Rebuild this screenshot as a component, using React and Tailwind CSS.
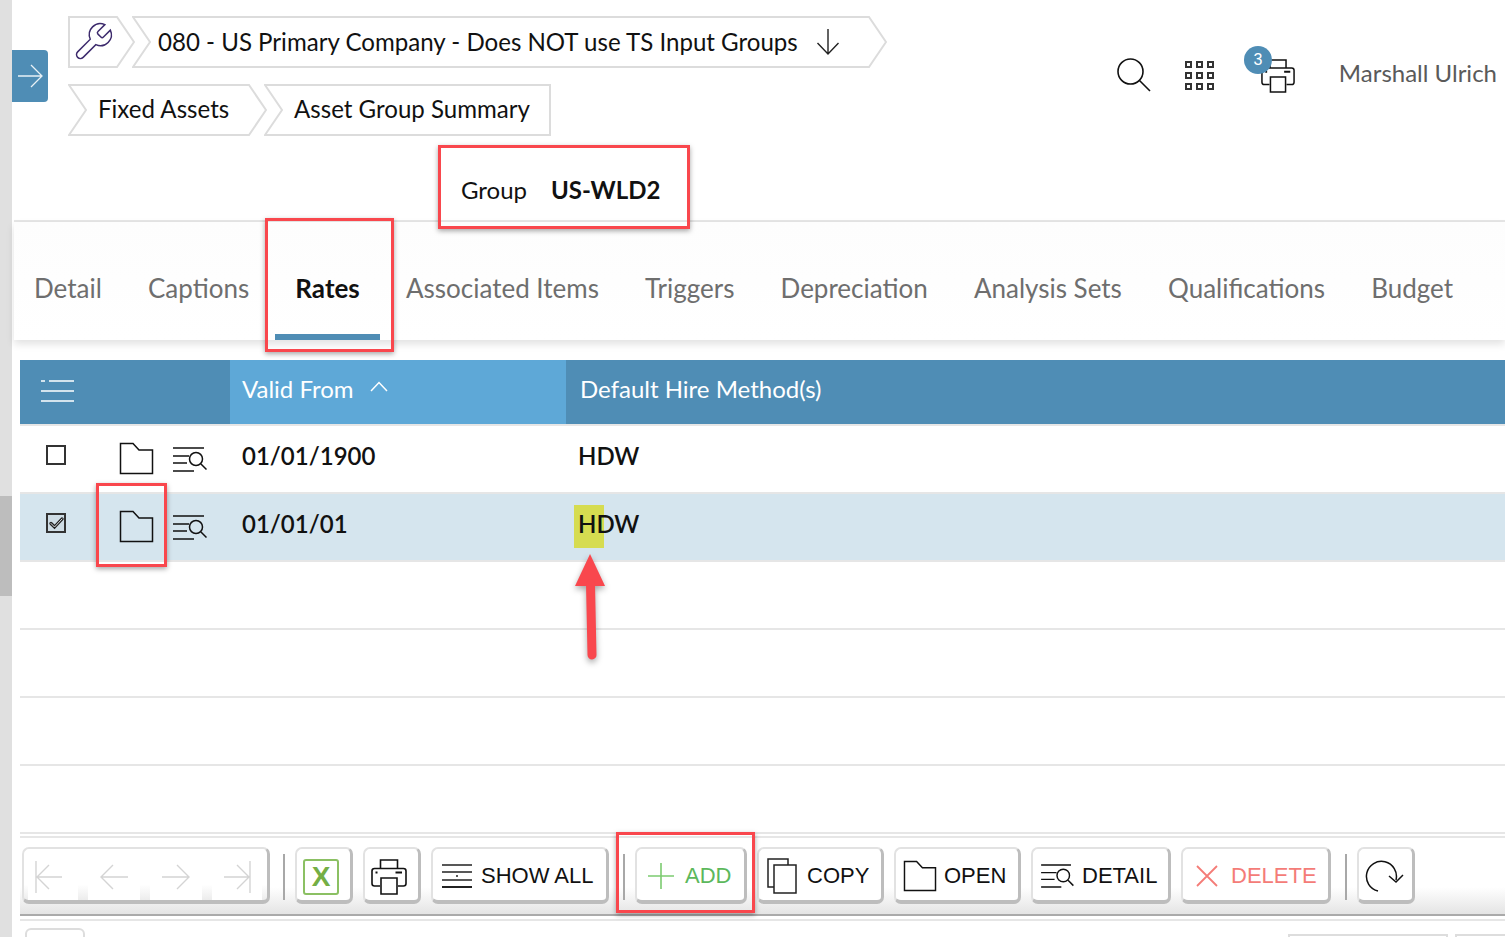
import React from 'react';

// thin outline icons used around the page
function FolderIcon({ className = 'w-[35px] h-[33px]' }) {
  return (
    <svg className={className} viewBox="0 0 35 33" fill="none" stroke="#111" strokeWidth="1.5">
      <path d="M1.5 31.5V1.5H14L20 8H33.5V31.5Z" />
    </svg>
  );
}

function DetailIcon({ className = 'w-[35px] h-[27px]' }) {
  return (
    <svg className={className} viewBox="0 0 35 27" fill="none" stroke="#111" strokeWidth="1.5">
      <path d="M1 2H32M1 10H17M1 17H15M1 25H22" />
      <circle cx="24" cy="13" r="6.5" />
      <path d="M29 18L34.5 23.5" />
    </svg>
  );
}

function PrinterIcon({ className = 'w-[36px] h-[36px]' }) {
  return (
    <svg className={className} viewBox="0 0 36 36" fill="none" stroke="#111" strokeWidth="1.6">
      <path d="M9.5 9.5V1H26.5V9.5" />
      <path d="M9 27H3.5Q1 27 1 24.5V12Q1 9.5 3.5 9.5H32.5Q35 9.5 35 12V24.5Q35 27 32.5 27H27" />
      <path d="M10 19H26V35H10Z" />
      <path d="M4.5 13.5H6.5M24.5 13.5H31" strokeWidth="2" />
    </svg>
  );
}

function Crumb({ width, left, right, children, textClass }) {
  const w = width;
  const start = left ? 'M1 1L18 26L1 51' : 'M1 1V51';
  const end = right ? `H${w - 18}L${w - 1} 26L${w - 18} 1Z` : `H${w - 1}V1Z`;
  return (
    <div className="relative h-[52px] flex items-center shrink-0" style={{ width }}>
      <svg className="absolute inset-0 w-full h-full" viewBox={`0 0 ${w} 52`} fill="none" stroke="#dcdcdc" strokeWidth="2">
        <path d={`${start}${end}`} />
      </svg>
      <div className={`relative flex items-center text-[24.08px] text-[#111] ${textClass}`}>{children}</div>
    </div>
  );
}

function Breadcrumbs() {
  return (
    <div className="flex flex-col gap-4">
      <div className="flex -space-x-[3px]">
        <Crumb width={67} right textClass="pl-[3px]">
          <svg className="w-[44px] h-[44px]" viewBox="0 0 24 24" fill="none" stroke="#3d2b6d" strokeWidth="0.8">
            <path d="M14.7 6.3a1 1 0 0 0 0 1.4l1.6 1.6a1 1 0 0 0 1.4 0l3.77-3.77a6 6 0 0 1-7.94 7.94l-6.91 6.91a2.12 2.12 0 0 1-3-3l6.91-6.91a6 6 0 0 1 7.94-7.94l-3.76 3.76z" />
          </svg>
        </Crumb>
        <Crumb width={755} left right textClass="pl-[26px]">
          <span>080 - US Primary Company - Does NOT use TS Input Groups</span>
          <svg className="ml-[18px] w-[24px] h-[28px]" viewBox="0 0 24 28" fill="none" stroke="#222" strokeWidth="1.4">
            <path d="M12 1V26M1.5 15L12 26L22.5 15" />
          </svg>
        </Crumb>
      </div>
      <div className="flex -space-x-[3px]">
        <Crumb width={199} left right textClass="pl-[30px] -mt-[2px]">Fixed Assets</Crumb>
        <Crumb width={287} left textClass="pl-[30px] -mt-[2px]">Asset Group Summary</Crumb>
      </div>
    </div>
  );
}

function HeaderActions() {
  return (
    <div className="ml-auto flex items-start pt-[30px] shrink-0">
      <svg className="mt-[12px] w-[34px] h-[34px]" viewBox="0 0 34 34" fill="none" stroke="#111" strokeWidth="1.6">
        <circle cx="13.5" cy="13.5" r="12.5" />
        <path d="M22.5 22.5L33 33" />
      </svg>
      <div className="ml-[34px] mt-[15px] grid grid-cols-3 gap-[4px]">
        {Array.from({ length: 9 }).map((_, i) => (
          <span key={i} className="block w-[7px] h-[7px] border-2 border-[#333]" />
        ))}
      </div>
      <div className="relative ml-[47px] mt-[12px] w-[34px] h-[36px]">
        <PrinterIcon className="w-[34px] h-[36px]" />
        <span className="absolute -left-[17px] -top-[12px] w-[28px] h-[28px] rounded-full bg-[#4f8db5] text-white text-[16px] flex items-center justify-center font-['Liberation_Sans',sans-serif]">
          3
        </span>
      </div>
      <span className="ml-[44px] mr-[8px] mt-[11px] text-[24px] leading-[32px] text-[#5a5a5a]">Marshall Ulrich</span>
    </div>
  );
}

function Tabs() {
  const tabs = ['Detail', 'Captions', 'Rates', 'Associated Items', 'Triggers', 'Depreciation', 'Analysis Sets', 'Qualifications', 'Budget'];
  return (
    <div className="h-[118px] ml-[2px] pl-[20px] pt-[16px] flex items-center gap-[46.15px] bg-gradient-to-b from-[#fdfdfd] to-white shadow-[0_4px_8px_rgba(0,0,0,0.12)]">
      {tabs.map(t => (
        <div key={t} className={`relative text-[26px] pb-[2px] ${t === 'Rates' ? 'font-bold text-[#111]' : 'text-[#6e6e6e]'}`}>
          {t}
          {t === 'Rates' && <span className="absolute -left-[20px] -right-[20px] top-[65px] h-[6px] bg-[#4f8db5]" />}
        </div>
      ))}
    </div>
  );
}

function Checkbox({ checked }) {
  return (
    <span className={`mb-[8px] w-[20px] h-[20px] border-2 border-[#333] flex items-center justify-center ${checked ? 'bg-[#cfdde5]' : 'bg-white'}`}>
      {checked && (
        <svg className="w-[15px] h-[14px]" viewBox="0 0 15 14" fill="none" strokeLinecap="round">
          <path d="M2 7.5L5.5 11L13 3" stroke="#222" strokeWidth="3.2" />
          <path d="M2 7.5L5.5 11L13 3" stroke="#eef3f6" strokeWidth="0.9" />
        </svg>
      )}
    </span>
  );
}

function Row({ checked, date, method, highlight }) {
  return (
    <div className={`h-[68px] border-b-2 border-[#e6e6e6] flex items-center ${checked ? 'bg-[#d5e5ee]' : 'bg-white'}`}>
      <div className="w-[210px] flex items-center pl-[26px] shrink-0">
        <Checkbox checked={checked} />
        <div className="ml-[53px] mb-[2px] flex"><FolderIcon /></div>
        <div className="ml-[18px] flex"><DetailIcon /></div>
      </div>
      <div className="w-[336px] pl-[12px] pb-[6px] shrink-0 text-[24px] font-semibold text-[#111]">{date}</div>
      <div className="relative pl-[12px] pb-[6px] text-[24px] font-semibold text-[#111]">
        {highlight && <span className="absolute left-[8px] top-[-1px] w-[30px] h-[43px] bg-[#d6dc50]" />}
        <span className="relative">{method}</span>
      </div>
    </div>
  );
}

function EmptyRow() {
  return <div className="h-[68px] border-b-2 border-[#e6e6e6] bg-white" />;
}

function Table() {
  return (
    <div className="mt-5 ml-2">
      <div className="h-[64px] flex items-center bg-[#4f8db5] text-white text-[24px]">
        <div className="w-[210px] pl-[20px] pb-[2px] shrink-0">
          <svg className="w-[34px] h-[22px]" viewBox="0 0 34 22" fill="none" stroke="#fff" strokeWidth="1.4">
            <path d="M1 1H5M9 1H34M1 11H34M1 21H34" />
          </svg>
        </div>
        <div className="w-[336px] h-full pl-[12px] pb-[7px] shrink-0 bg-[#5ea8d7] flex items-center">
          Valid From
          <svg className="ml-[16px] mb-[4px] w-[18px] h-[11px]" viewBox="0 0 18 11" fill="none" stroke="#fff" strokeWidth="1.5">
            <path d="M1 10L9 1.5L17 10" />
          </svg>
        </div>
        <div className="pl-[14px] pb-[7px]">Default Hire Method(s)</div>
      </div>
      <div className="border-t-2 border-[#e6e6e6]">
        <Row date="01/01/1900" method="HDW" />
        <Row checked date="01/01/01" method="HDW" highlight />
        <EmptyRow />
        <EmptyRow />
        <EmptyRow />
        <EmptyRow />
      </div>
    </div>
  );
}

function Raised({ className = '', children }) {
  return (
    <div className={`h-[57px] shrink-0 rounded-[7px] border-2 border-[#e2e2e2] border-r-[3px] border-r-[#bdbdbd] border-b-[4px] border-b-[#bdbdbd] bg-white flex items-center ${className}`}>
      {children}
    </div>
  );
}

function ToolButton({ width, label, labelClass = 'text-[#111]', children }) {
  return (
    <Raised className="pt-[2px] font-['Liberation_Sans',sans-serif] text-[22px]">
      <div className="flex items-center" style={{ width }}>
        {children}
        <span className={labelClass}>{label}</span>
      </div>
    </Raised>
  );
}

const Separator = () => <span className="block w-[2px] h-[46px] bg-[#a8a8a8] shrink-0" />;

function Pager() {
  const pale = '#d4d4d4';
  return (
    <Raised className="w-[248px] px-[4px] gap-[10px] bg-gradient-to-b from-white from-70% to-[#ececec]">
      <div className="w-[50px] h-[50px] pr-[8px] pt-[4px] bg-white flex items-center justify-center">
        <svg className="w-[28px] h-[32px]" viewBox="0 0 28 32" fill="none" stroke={pale} strokeWidth="1.4"><path d="M1 0V32M27 16H2M14 4L2 16L14 28" /></svg>
      </div>
      <div className="w-[52px] h-[50px] pt-[4px] bg-white flex items-center justify-center">
        <svg className="w-[30px] h-[26px]" viewBox="0 0 30 26" fill="none" stroke={pale} strokeWidth="1.4"><path d="M29 13H2M14 1L2 13L14 25" /></svg>
      </div>
      <div className="w-[52px] h-[50px] pt-[4px] bg-white flex items-center justify-center">
        <svg className="w-[30px] h-[26px]" viewBox="0 0 30 26" fill="none" stroke={pale} strokeWidth="1.4"><path d="M1 13H28M16 1L28 13L16 25" /></svg>
      </div>
      <div className="w-[50px] h-[50px] pt-[4px] bg-white flex items-center justify-center">
        <svg className="w-[28px] h-[32px]" viewBox="0 0 28 32" fill="none" stroke={pale} strokeWidth="1.4"><path d="M27 0V32M1 16H26M14 4L26 16L14 28" /></svg>
      </div>
    </Raised>
  );
}

function Toolbar() {
  return (
    <div className="ml-2 mt-[2px]">
      <div className="h-[2px] mb-[9px] bg-[#e6e6e6]" />
      <div className="h-[69px] pl-[2px] flex items-start border-b-2 border-[#aaaaaa] bg-gradient-to-b from-white from-60% to-[#e4e4e4]">
        <Pager />
        <div className="ml-[13px] mt-[7px]"><Separator /></div>
        <div className="ml-[10px]">
          <Raised className="w-[58px] pl-[6px] pt-[4px]">
            <span className="w-[36px] h-[36px] rounded-[3px] border-2 border-[#8bc063] flex items-center justify-center text-[#74ae45] text-[28px] font-bold leading-none font-['Liberation_Sans',sans-serif]">
              X
            </span>
          </Raised>
        </div>
        <div className="ml-[10px]">
          <Raised className="w-[58px] pl-[6px] pt-[4px]"><PrinterIcon /></Raised>
        </div>
        <div className="ml-[10px]">
          <ToolButton width={173} label="SHOW ALL">
            <svg className="ml-[9px] mr-[9px] w-[30px] h-[24px]" viewBox="0 0 30 24" fill="none" stroke="#222" strokeWidth="1.4">
              <path d="M0 1H30M0 8H30M0 16H30" />
              <path d="M0 23H30" strokeWidth="2" />
              <path d="M14 12H16" />
            </svg>
          </ToolButton>
        </div>
        <div className="ml-[14px] mt-[7px]"><Separator /></div>
        <div className="ml-[10px]">
          <ToolButton width={107} label="ADD" labelClass="text-[#5cb85c]">
            <svg className="ml-[11px] mr-[11px] w-[26px] h-[26px]" viewBox="0 0 26 26" fill="none" stroke="#7ccb70" strokeWidth="1.6">
              <path d="M13 0V26M0 13H26" />
            </svg>
          </ToolButton>
        </div>
        <div className="ml-[10px]">
          <ToolButton width={122} label="COPY">
            <svg className="ml-[8px] mr-[10px] w-[30px] h-[36px]" viewBox="0 0 30 36" fill="none" stroke="#222" strokeWidth="1.5">
              <path d="M7 29H1V1H21V7" />
              <path d="M7 7H29V35H7Z" />
            </svg>
          </ToolButton>
        </div>
        <div className="ml-[10px]">
          <ToolButton width={122} label="OPEN">
            <FolderIcon className="ml-[7px] mr-[7px] w-[34px] h-[32px]" />
          </ToolButton>
        </div>
        <div className="ml-[10px]">
          <ToolButton width={135} label="DETAIL">
            <DetailIcon className="ml-[7px] mr-[8px] w-[34px] h-[26px]" />
          </ToolButton>
        </div>
        <div className="ml-[10px]">
          <ToolButton width={145} label="DELETE" labelClass="text-[#f47c78]">
            <svg className="ml-[13px] mr-[13px] w-[22px] h-[22px]" viewBox="0 0 22 22" fill="none" stroke="#f47c78" strokeWidth="1.8">
              <path d="M1 1L21 21M21 1L1 21" />
            </svg>
          </ToolButton>
        </div>
        <div className="ml-[14px] mt-[7px]"><Separator /></div>
        <div className="ml-[10px]">
          <Raised className="w-[58px] pl-[6px] pt-[3px]">
            <svg className="w-[40px] h-[32px]" viewBox="0 0 40 32" fill="none" stroke="#111" strokeWidth="1.5">
              <path d="M13 31A15 15 0 1 1 31 20" />
              <path d="M24 16L31 22L38 15" />
            </svg>
          </Raised>
        </div>
      </div>
      <div className="h-[2px] mt-[3px] bg-[#e6e6e6]" />
      <div className="mt-[7px] flex items-start">
        <div className="ml-[5px] w-[60px] h-[20px] rounded-t-[6px] border-2 border-[#dddddd]" />
        <div className="ml-auto mt-[6px] w-[160px] h-[20px] border-2 border-[#dddddd]" />
        <div className="ml-[7px] mt-[6px] w-[50px] h-[20px] border-2 border-r-0 border-[#dddddd]" />
      </div>
    </div>
  );
}

// red markup drawn on top of the screenshot
function Callout({ className }) {
  return <div className={`absolute border-[3px] border-[#f9474d] shadow-[0_2px_5px_rgba(0,0,0,0.35)] ${className}`} />;
}

export default function App() {
  return (
    <div className="relative w-[1505px] h-[937px] overflow-hidden flex bg-white font-['Lato',sans-serif]">
      <aside className="w-3 shrink-0 bg-[#e0e0e0]">
        <div className="h-[496px]" />
        <div className="h-[100px] bg-[#bdbdbd]" />
      </aside>

      <main className="flex-1 min-w-0">
        <header className="h-[145px] flex items-start pt-4">
          <div className="mt-[34px] w-9 h-[52px] shrink-0 rounded-r-[4px] bg-[#4f8db5] flex items-center justify-center">
            <svg className="w-[26px] h-[24px]" viewBox="0 0 26 24" fill="none" stroke="#e8f1f6" strokeWidth="1.3">
              <path d="M1 12H25M14 1L25 12L14 23" />
            </svg>
          </div>
          <div className="ml-5"><Breadcrumbs /></div>
          <HeaderActions />
        </header>

        <div className="h-[77px] ml-[2px] flex items-center pl-[447px] pt-[15px] border-b-2 border-[#e6e6e6] text-[24px] text-[#111]">
          <span>Group</span>
          <span className="ml-[24px] font-bold">US-WLD2</span>
        </div>

        <Tabs />
        <Table />
        <Toolbar />
      </main>

      <Callout className="left-[438px] top-[145px] w-[252px] h-[84px]" />
      <Callout className="left-[265px] top-[218px] w-[129px] h-[134px]" />
      <Callout className="left-[96px] top-[483px] w-[71px] h-[84px]" />
      <Callout className="left-[616px] top-[832px] w-[139px] h-[81px]" />
      <svg className="absolute left-[570px] top-[550px] w-[40px] h-[115px] drop-shadow-[0_3px_3px_rgba(0,0,0,0.35)]" viewBox="0 0 40 115" fill="none">
        <path d="M20 4L35 36H5Z" fill="#f9474d" />
        <path d="M20.5 34L22 105" stroke="#f9474d" strokeWidth="9" strokeLinecap="round" />
      </svg>
    </div>
  );
}
